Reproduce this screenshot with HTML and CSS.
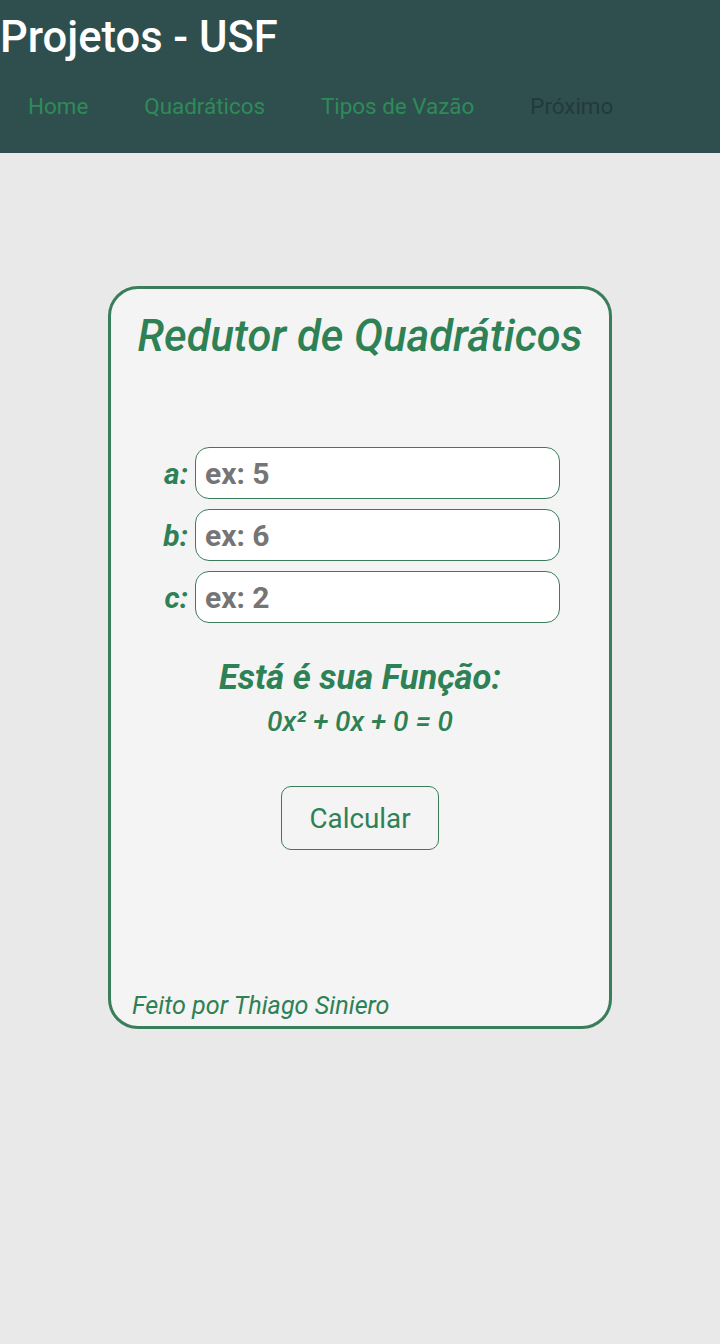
FILE: index.html
```html
<!DOCTYPE html>
<html lang="pt-BR">
<head>
<meta charset="utf-8">
<title>Projetos - USF</title>
<link rel="stylesheet" href="styles.css">
</head>
<body>
<header class="topbar">
  <h1 class="brand">Projetos - USF</h1>
  <nav class="nav">
    <a class="nav-link" href="#">Home</a>
    <a class="nav-link" href="#">Quadráticos</a>
    <a class="nav-link" href="#">Tipos de Vazão</a>
    <a class="nav-link nav-next" href="#">Próximo</a>
  </nav>
</header>
<main class="main">
  <section class="card">
    <h2 class="card-title">Redutor de Quadráticos</h2>
    <form class="form">
      <div class="row"><label class="label" for="a">a:</label><input class="field" id="a" type="text" placeholder="ex: 5"></div>
      <div class="row"><label class="label" for="b">b:</label><input class="field" id="b" type="text" placeholder="ex: 6"></div>
      <div class="row"><label class="label" for="c">c:</label><input class="field" id="c" type="text" placeholder="ex: 2"></div>
    </form>
    <h3 class="func-title">Está é sua Função:</h3>
    <p class="equation">0x² + 0x + 0 = 0</p>
    <button class="btn" type="button">Calcular</button>
    <p class="credit">Feito por Thiago Siniero</p>
  </section>
</main>
</body>
</html>
```
FILE: styles.css
```css
* { box-sizing: border-box; }
html, body {
  margin: 0;
  padding: 0;
  background: #e9e9e9;
  font-family: Roboto, "Liberation Sans", sans-serif;
}
.topbar {
  background: #2f4f4f;
  height: 153px;
  padding-top: 13px;
}
.brand {
  margin: 0;
  color: #ffffff;
  font-size: 43.5px;
  font-weight: 500;
  line-height: 50px;
}
.nav {
  display: flex;
  margin-top: 30px;
}
.nav-link {
  font-size: 22.4px;
  line-height: 26px;
  color: #2e8b57;
  text-decoration: none;
  padding: 0 28px;
}
.nav-next { color: #24393b; }
.main {
  padding-top: 133px;
}
.card {
  width: 504px;
  height: 743px;
  margin: 0 auto;
  background: #f4f4f4;
  border: 3px solid #3a7d5a;
  border-radius: 30px;
  display: flex;
  flex-direction: column;
  align-items: center;
  padding-top: 22px;
  color: #2e8055;
}
.card-title {
  margin: 0;
  font-size: 43.5px;
  line-height: 52px;
  font-style: italic;
  font-weight: 500;
}
.form {
  margin-top: 84px;
  display: flex;
  flex-direction: column;
  gap: 10px;
}
.row {
  display: flex;
  align-items: center;
}
.label {
  width: 28px;
  margin-right: 7px;
  text-align: right;
  font-size: 30px;
  font-weight: 700;
  font-style: italic;
  color: #2e8055;
}
.field {
  width: 365px;
  height: 52px;
  border: 1px solid #3a7d5a;
  border-radius: 14px;
  background: #ffffff;
  padding: 0 9px;
  font-family: Roboto, "Liberation Sans", sans-serif;
  font-size: 30px;
  font-weight: 700;
  color: #333;
  outline: none;
}
.field::placeholder { color: #757575; }
.func-title {
  margin: 36px 0 0;
  font-size: 34.5px;
  line-height: 36px;
  font-weight: 700;
  font-style: italic;
}
.equation {
  margin: 12px 0 0;
  font-size: 28px;
  line-height: 30px;
  font-weight: 500;
  font-style: italic;
}
.btn {
  margin-top: 49px;
  width: 158px;
  height: 64px;
  border: 1px solid #3a7d5a;
  border-radius: 10px;
  background: transparent;
  color: #2e8055;
  font-family: Roboto, "Liberation Sans", sans-serif;
  font-size: 27.8px;
}
.credit {
  margin: auto 0 0;
  align-self: flex-start;
  padding-left: 21px;
  padding-bottom: 6px;
  font-size: 25.2px;
  line-height: 28px;
  font-style: italic;
}
```
